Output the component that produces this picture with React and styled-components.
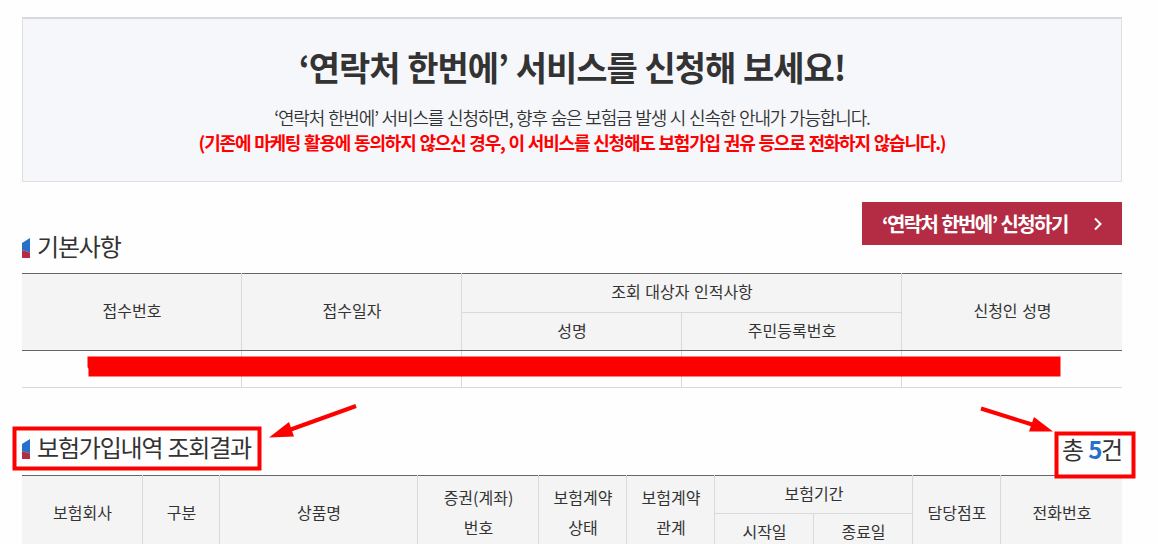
import React from 'react'
import styled, { createGlobalStyle } from 'styled-components'

const GlobalStyle = createGlobalStyle`
  * {
    box-sizing: border-box;
  }
  body {
    margin: 0;
    background: #fefefe;
    color: #333;
    font-family: 'Noto Sans CJK KR', 'Noto Sans', sans-serif;
    font-size: 16px;
  }
  h2, h3, p {
    margin: 0;
  }
`

const Page = styled.main`
  position: relative;
  height: 544px;
  overflow: hidden;
  padding: 17px 36px 0 22px;
`

const Notice = styled.section`
  height: 165px;
  padding-top: 22px;
  text-align: center;
  background: #f6f7fb;
  border: 1px solid #dfdfe1;
  border-top: 2px solid #d9d9db;
`

const NoticeTitle = styled.h2`
  font-size: 34px;
  font-weight: 700;
  line-height: 52px;
  letter-spacing: -1px;
  word-spacing: 0.9px;
  white-space: nowrap;
`

const NoticeText = styled.p`
  margin-top: ${({ warning }) => (warning ? 0 : '12px')};
  font-size: 18px;
  font-weight: ${({ warning }) => (warning ? 700 : 350)};
  line-height: 25px;
  letter-spacing: ${({ warning }) => (warning ? '-1.2px' : '-1.15px')};
  word-spacing: ${({ warning }) => (warning ? '1px' : '0.9px')};
  white-space: nowrap;
  color: ${({ warning }) => (warning ? '#f00' : '#333')};
`

const ButtonRow = styled.div`
  display: flex;
  justify-content: flex-end;
  margin-top: 20px;
`

const ApplyButton = styled.button`
  display: flex;
  align-items: center;
  justify-content: space-between;
  width: 260px;
  height: 43px;
  padding: 0 20px;
  border: 0;
  background: #b32c43;
  color: #fff;
  font-family: inherit;
  font-size: 20px;
  font-weight: 700;
  letter-spacing: -1.6px;
  word-spacing: 1px;
  white-space: nowrap;
`

const SectionHead = styled.div`
  display: flex;
  align-items: center;
  height: 36px;
  margin-top: ${({ top }) => top}px;
  margin-bottom: ${({ bottom }) => bottom}px;
`

const SectionTitle = styled.h3`
  margin-left: 7px;
  padding-bottom: 4px;
  font-size: 24px;
  font-weight: 400;
  line-height: 36px;
  letter-spacing: -1.2px;
  word-spacing: 1px;
`

const Total = styled.span`
  margin-left: auto;
  font-size: 24px;
  line-height: 36px;
  letter-spacing: -1.2px;
  word-spacing: 1px;
  & > strong {
    font-weight: 700;
    color: #2570c9;
  }
`

// the 1px gaps over the grey background draw the inner lines
const Grid = styled.div`
  display: grid;
  grid-template-columns: ${({ cols }) => cols};
  grid-template-rows: ${({ rows }) => rows};
  gap: 1px;
  background: #d9d9d9;
  border-bottom: 1px solid ${({ light }) => (light ? '#d9d9d9' : '#666')};
`

const Th = styled.div`
  display: flex;
  align-items: center;
  justify-content: center;
  grid-row: ${({ sub, group }) => (sub ? '2' : group ? '1' : '1 / 3')};
  grid-column: ${({ col, group }) => (group ? `${col} / span 2` : col)};
  padding: 0 0 4px 1px;
  background: #f4f4f4;
  border-top: ${({ sub }) => (sub ? '0' : '1px solid #666')};
  line-height: 30px;
  word-spacing: 1px;
  text-align: center;
  white-space: pre-line;
`

const Td = styled.div`
  background: #fefefe;
`

const Marks = styled.svg`
  position: absolute;
  top: 0;
  left: 0;
  pointer-events: none;
`

const Bullet = () => (
  <svg width="8" height="20" viewBox="0 0 8 20">
    <path d="M0 5L8 0V14.5L0 12z" fill="#2570c9" />
    <path d="M0 12L8 14.5V20H0z" fill="#b32c43" />
  </svg>
)

const BASIC_COLS = '219px 219px 219px 219px 220px'
const BASIC_HEADS = [
  { text: '접수번호', col: 1 },
  { text: '접수일자', col: 2 },
  { text: '조회 대상자 인적사항', col: 3, group: true },
  { text: '성명', col: 3, sub: true },
  { text: '주민등록번호', col: 4, sub: true },
  { text: '신청인 성명', col: 5 },
]

const RESULT_COLS = '120px 76px 197px 120px 87px 87px 98px 98px 87px 121px'
const RESULT_HEADS = [
  { text: '보험회사', col: 1 },
  { text: '구분', col: 2 },
  { text: '상품명', col: 3 },
  { text: '증권(계좌)\n번호', col: 4 },
  { text: '보험계약\n상태', col: 5 },
  { text: '보험계약\n관계', col: 6 },
  { text: '보험기간', col: 7, group: true },
  { text: '시작일', col: 7, sub: true },
  { text: '종료일', col: 8, sub: true },
  { text: '담당점포', col: 9 },
  { text: '전화번호', col: 10 },
]

const HeadGrid = ({ heads, cols, rows }) => (
  <Grid cols={cols} rows={rows}>
    {heads.map(({ text, ...rest }) => (
      <Th key={text} {...rest}>
        {text}
      </Th>
    ))}
  </Grid>
)

const App = () => {
  return (
    <>
      <GlobalStyle />
      <Page>
        <Notice>
          <NoticeTitle>‘연락처 한번에’ 서비스를 신청해 보세요!</NoticeTitle>
          <NoticeText>
            ‘연락처 한번에’ 서비스를 신청하면, 향후 숨은 보험금 발생 시 신속한 안내가 가능합니다.
          </NoticeText>
          <NoticeText warning>
            (기존에 마케팅 활용에 동의하지 않으신 경우, 이 서비스를 신청해도 보험가입 권유 등으로 전화하지 않습니다.)
          </NoticeText>
        </Notice>
        <ButtonRow>
          <ApplyButton>
            ‘연락처 한번에’ 신청하기
            <svg width="8" height="14" viewBox="0 0 8 14" fill="none">
              <path d="M1 1.5L6.5 7L1 12.5" stroke="#fff" strokeWidth="2" />
            </svg>
          </ApplyButton>
        </ButtonRow>
        <SectionHead top={-15} bottom={7}>
          <Bullet />
          <SectionTitle>기본사항</SectionTitle>
        </SectionHead>
        <HeadGrid heads={BASIC_HEADS} cols={BASIC_COLS} rows="39px 37px" />
        <Grid cols={BASIC_COLS} rows="36px" light>
          {[1, 2, 3, 4, 5].map((n) => (
            <Td key={n} />
          ))}
        </Grid>
        <SectionHead top={43} bottom={8}>
          <Bullet />
          <SectionTitle>보험가입내역 조회결과</SectionTitle>
          <Total>
            총 <strong>5</strong>건
          </Total>
        </SectionHead>
        <HeadGrid heads={RESULT_HEADS} cols={RESULT_COLS} rows="38px 37px" />
        <Marks width="1158" height="544" viewBox="0 0 1158 544">
          <path d="M87.5 356.5H1060.5V376.5H88.5V369L87.5 367z" fill="#f00" />
          <g fill="none" stroke="#f00" strokeWidth="4">
            <rect x="14.5" y="428.5" width="245" height="40" />
            <rect x="1056.5" y="433.5" width="77" height="43" />
            <path d="M356 406L288 430.5M981 408.5L1032 424.5" />
          </g>
          <path d="M269 437.5L289 422L294 436.5z" fill="#f00" />
          <path d="M1053 431.5L1034 417L1029 431.5z" fill="#f00" />
        </Marks>
      </Page>
    </>
  )
}

export default App
